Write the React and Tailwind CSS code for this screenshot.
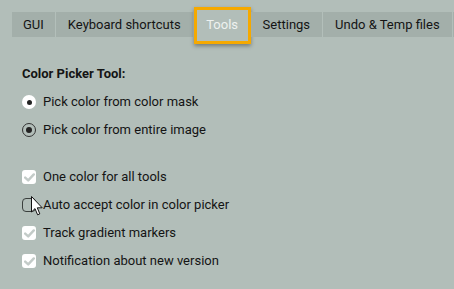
import React from "react";

const tabs = [
  { label: "GUI", pad: "px-[11px]" },
  { label: "Keyboard shortcuts", pad: "px-[12px]" },
  { label: "Tools", active: true },
  { label: "Settings", pad: "px-[12px]" },
  { label: "Undo & Temp files", pad: "px-[12px]" },
  { label: "", pad: "px-[12px]" },
];

function Radio({ filled }) {
  return filled ? (
    <span className="w-[14px] h-[14px] rounded-full bg-white flex items-center justify-center shrink-0">
      <span className="w-[5px] h-[5px] rounded-full bg-[#222]" />
    </span>
  ) : (
    <span className="w-[14px] h-[14px] rounded-full border border-[#333] flex items-center justify-center shrink-0">
      <span className="w-[6px] h-[6px] rounded-full bg-[#222]" />
    </span>
  );
}

function Checkbox({ checked }) {
  if (!checked) {
    return (
      <span className="w-[14px] h-[14px] rounded-[4px] border-[1.5px] border-[#3a3f3d] shrink-0" />
    );
  }
  return (
    <span className="w-[14px] h-[14px] rounded-[3px] bg-white flex items-center justify-center shrink-0">
      <svg width="11" height="9" viewBox="0 0 11 9">
        <path
          d="M1.2 4.6 L4.2 7.4 L9.8 1.4"
          fill="none"
          stroke="#c3cbc8"
          strokeWidth="2.4"
          strokeLinecap="round"
          strokeLinejoin="round"
        />
      </svg>
    </span>
  );
}

function Cursor() {
  return (
    <svg
      className="absolute left-[9px] top-[5px]"
      width="13"
      height="20"
      viewBox="0 0 13 20"
    >
      <path
        d="M0.5 0.5 L0.5 16 L4 12.6 L6.6 18.8 L8.8 17.9 L6.3 11.8 L11.2 11.8 Z"
        fill="white"
        stroke="#111"
        strokeWidth="1"
        strokeLinejoin="miter"
      />
    </svg>
  );
}

function Row({ control, label, cursor }) {
  return (
    <div className="relative h-[28px] flex items-center gap-[7px]">
      {control}
      <span>{label}</span>
      {cursor && <Cursor />}
    </div>
  );
}

export default function App() {
  return (
    <div
      className="w-[454px] h-[289px] bg-[#b2beb9] text-[13px] text-[#141414] overflow-hidden"
      style={{ fontFamily: "Roboto, 'Liberation Sans', sans-serif" }}
    >
      <div className="flex h-[25px] mt-[12px] pl-[12px]">
        {tabs.map((t, i) =>
          t.active ? (
            <div
              key={i}
              className="-mt-[5px] h-[37px] w-[57px] ml-[1px] border-[3px] border-[#f5a900] bg-[#b2beb9] text-[#eef2f0] flex items-center justify-center pb-[1px] shadow-[0_2px_4px_rgba(0,0,0,0.35)] shrink-0"
            >
              {t.label}
            </div>
          ) : (
            <div
              key={i}
              className={
                "h-full bg-[#a3afaa] flex items-center shrink-0 whitespace-nowrap " +
                t.pad +
                (i === 0 || i === 3 || i === 4 ? " border-r border-[#b3bfba]" : "")
              }
            >
              {t.label}
            </div>
          )
        )}
      </div>

      <div className="pl-[22px] pt-[29px]">
        <div className="font-bold leading-[16px]">Color Picker Tool:</div>
        <div className="mt-[6px]">
          <Row control={<Radio filled />} label="Pick color from color mask" />
          <Row control={<Radio />} label="Pick color from entire image" />
        </div>
        <div className="mt-[19px]">
          <Row control={<Checkbox checked />} label="One color for all tools" />
          <Row
            control={<Checkbox />}
            label="Auto accept color in color picker"
            cursor
          />
          <Row control={<Checkbox checked />} label="Track gradient markers" />
          <Row
            control={<Checkbox checked />}
            label="Notification about new version"
          />
        </div>
      </div>
    </div>
  );
}
